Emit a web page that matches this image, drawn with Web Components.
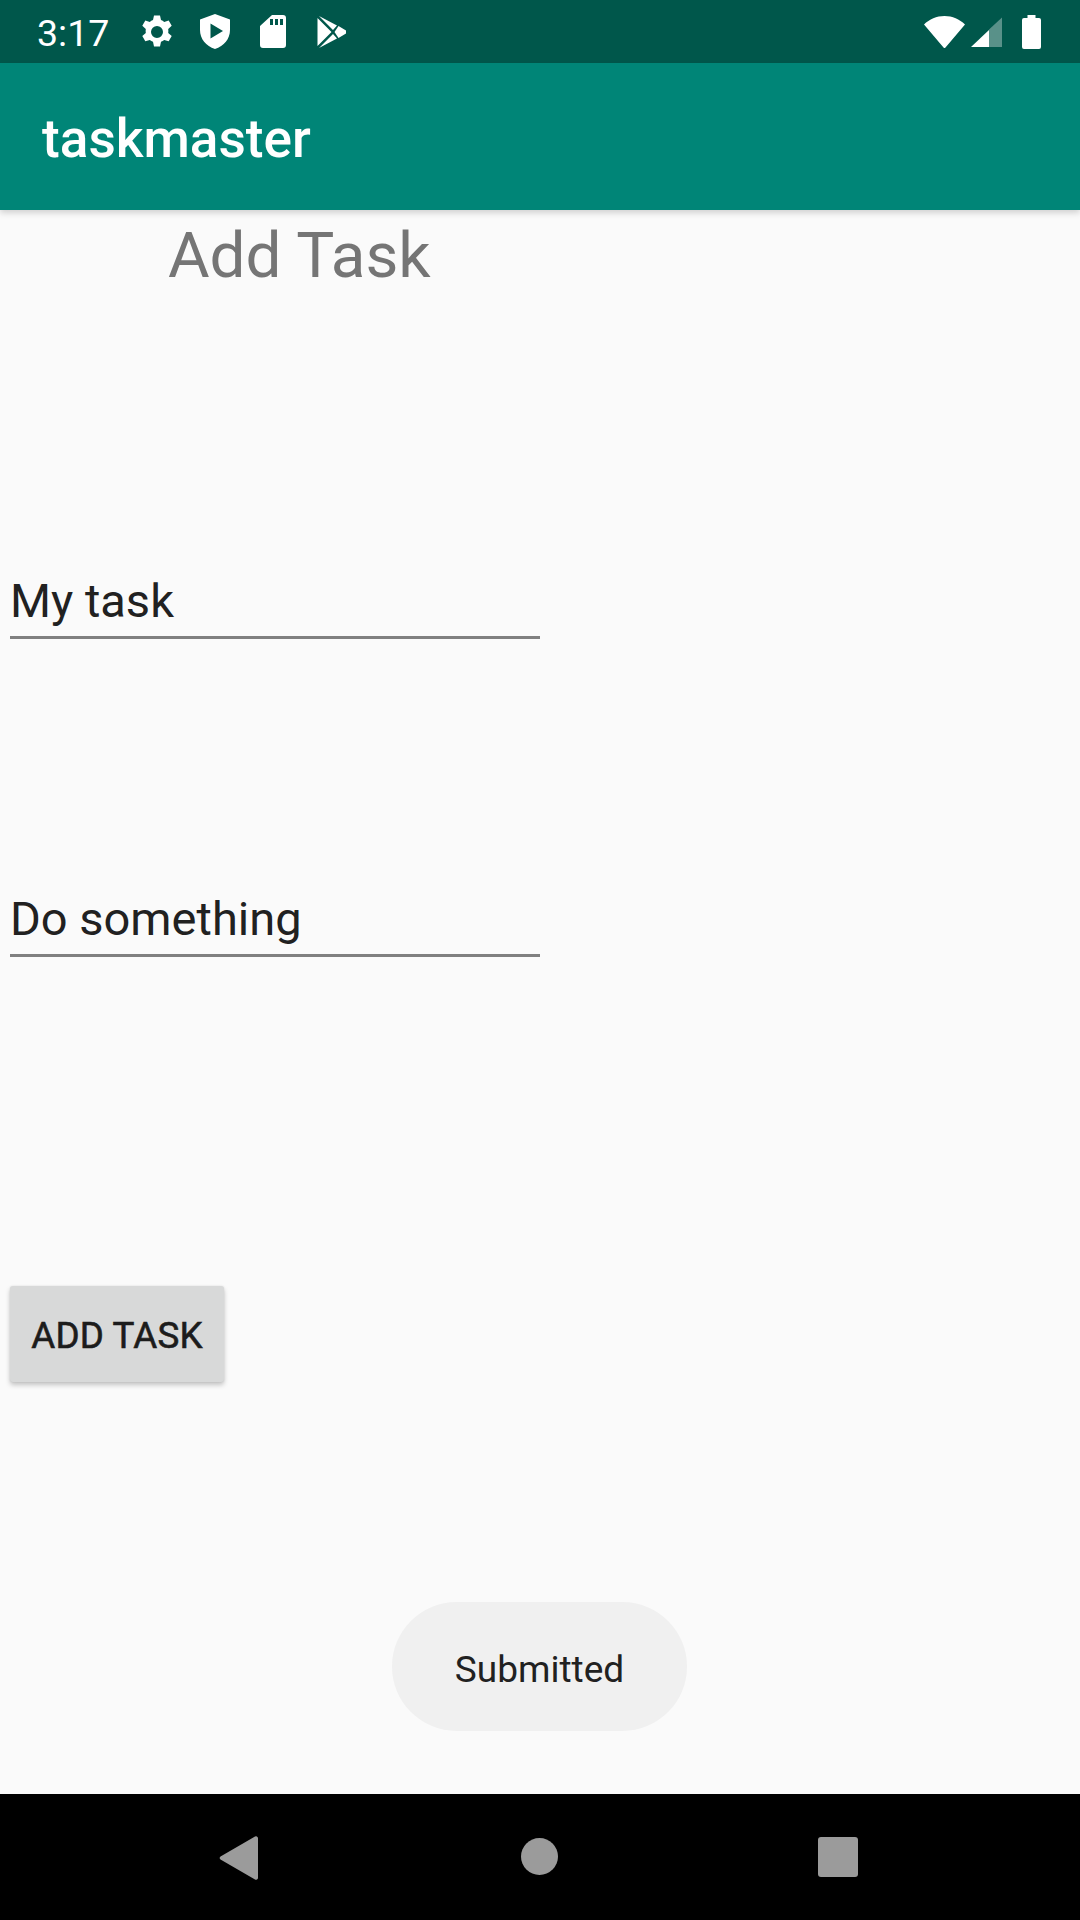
<!DOCTYPE html>
<html><head><meta charset="utf-8"><style>
html,body{margin:0;padding:0;width:1080px;height:1920px;overflow:hidden;background:#fafafa;font-family:Roboto,"Liberation Sans",sans-serif}
body{display:flex;flex-direction:column}
</style></head><body>
<app-statusbar></app-statusbar>
<app-bar>taskmaster</app-bar>
<task-form></task-form>
<nav-bar></nav-bar>
<app-toast>Submitted</app-toast>
<script>
function def(name,html){customElements.define(name,class extends HTMLElement{constructor(){super();this.attachShadow({mode:'open'}).innerHTML=html}})}
def('app-statusbar',`<style>
:host{display:flex;align-items:center;height:63px;background:#00574b;color:#fff;flex:none;position:relative}
.t{font:400 37.5px/66px Roboto,sans-serif;margin-left:37px;width:104px;white-space:nowrap;height:63px}
svg{display:block;fill:#fff;flex:none}
.sp{flex:1}
</style>
<span class="t">3:17</span>
<svg width="32" height="34" viewBox="0 0 32 34"><path fill-rule="evenodd" d="M13 0.500h6l1 4.600a12 12 0 0 1 3.200 1.900l4.500-1.400 3 5.200-3.500 3.200a12 12 0 0 1 0 3.900l3.500 3.200-3 5.200-4.500-1.400a12 12 0 0 1-3.200 1.900l-1 4.600h-6l-1-4.600a12 12 0 0 1-3.200-1.900l-4.500 1.400-3-5.200 3.500-3.200a12 12 0 0 1 0-3.900l-3.500-3.200 3-5.200 4.500 1.400a12 12 0 0 1 3.200-1.900zM16 11a6 6 0 1 0 0 12 6 6 0 0 0 0-12z"/></svg>
<svg style="margin-left:27px" width="30" height="35" viewBox="0 0 30 35"><path fill-rule="evenodd" d="M15 0L30 5.500V16C30 25 24 32 15 35C6 32 0 25 0 16V5.500zM10.500 9.500V24.500L23 17z"/></svg>
<svg style="margin-left:30px" width="26" height="33" viewBox="0 0 26 33"><path fill-rule="evenodd" d="M12 0H23a3 3 0 0 1 3 3V30a3 3 0 0 1-3 3H3a3 3 0 0 1-3-3V11zM10 4V10H13V4zM15 4V10H18V4zM20 4V10H23V4z"/></svg>
<svg style="margin-left:31px" width="29" height="32" viewBox="0 0 29 32"><path d="M0.500 2V30L14.500 16zM2 0L20 9.500 16 14zM2 32L20 22.500 16 18zM21.500 10L29 14.500a1.500 1.500 0 0 1 0 3L21.500 22 17.500 16z"/></svg>
<span class="sp"></span>
<svg width="41" height="32" viewBox="0 0 41 32"><path d="M0 8.500C5.500 3.200 12.500 0 20.500 0S35.500 3.200 41 8.500L21.500 31.500a1.300 1.300 0 0 1-2 0z"/></svg>
<svg style="margin-left:6px" width="31" height="31" viewBox="0 0 31 31"><path d="M18 14L0 31H18z"/><path fill-opacity=".35" d="M31 1.500V31H18V13.500z"/></svg>
<svg style="margin:0 39px 0 20px" width="19" height="34" viewBox="0 0 19 34"><path d="M5.500 0h8v3H17a2 2 0 0 1 2 2V32a2 2 0 0 1-2 2H2a2 2 0 0 1-2-2V5a2 2 0 0 1 2-2h3.500z"/></svg>`);
def('app-bar',`<style>
:host{display:block;height:147px;background:#008577;color:#fff;flex:none;position:relative;z-index:1;box-shadow:0 3px 6px rgba(0,0,0,.16);font:500 53.2px/152px Roboto,sans-serif;padding-left:42px}
</style><slot></slot>`);
def('text-field',`<style>
:host{display:block;width:530px;margin-left:10px;height:73px;border-bottom:3px solid #808080;color:#212121;font:400 47px/75px Roboto,sans-serif}
</style><slot></slot>`);
def('raised-button',`<style>
:host{display:flex;align-items:center;justify-content:center;width:214px;height:96px;margin-left:10px;background:#d8d9d9;border-radius:3px;color:#1c1c1c;font:400 36.75px/1 Roboto,sans-serif;-webkit-text-stroke:.6px #1c1c1c;letter-spacing:.2px;box-sizing:border-box;padding-top:5px;box-shadow:0 3px 5px rgba(0,0,0,.22),0 0 2px rgba(0,0,0,.1)}
</style><slot></slot>`);
def('task-form',`<style>
:host{display:block;flex:1;min-height:0;background:#fafafa}
.title{font:400 63.800px/70px Roboto,sans-serif;color:#757575;margin:11px 0 0 168px}
.a{margin-top:272px}.b{margin-top:242px}.c{margin-top:329px}
</style><div class="title">Add Task</div>
<text-field class="a">My task</text-field>
<text-field class="b">Do something</text-field>
<raised-button class="c">ADD TASK</raised-button>`);
def('nav-bar',`<style>
:host{display:flex;height:126px;background:#000;flex:none;position:relative}
svg{position:absolute;fill:#9b9b9b}
</style>
<svg style="left:219px;top:42px" width="39" height="44" viewBox="0 0 39 44"><path d="M36 0.500a2 2 0 0 1 3 1.500V42a2 2 0 0 1-3 1.500L1.500 23.500a2 2 0 0 1 0-3z"/></svg>
<svg style="left:521px;top:44px" width="37" height="37" viewBox="0 0 37 37"><circle cx="18.500" cy="18.500" r="18.500"/></svg>
<svg style="left:818px;top:43px" width="40" height="40" viewBox="0 0 40 40"><rect width="40" height="40" rx="3"/></svg>`);
def('app-toast',`<style>
:host{position:absolute;left:392px;top:1602px;width:295px;height:129px;box-sizing:border-box;padding-top:5px;display:flex;align-items:center;justify-content:center;background:#f0f0f0;border-radius:64.500px;color:#212121;font:400 37px/1 Roboto,sans-serif}
</style><slot></slot>`);
</script>
</body></html>
